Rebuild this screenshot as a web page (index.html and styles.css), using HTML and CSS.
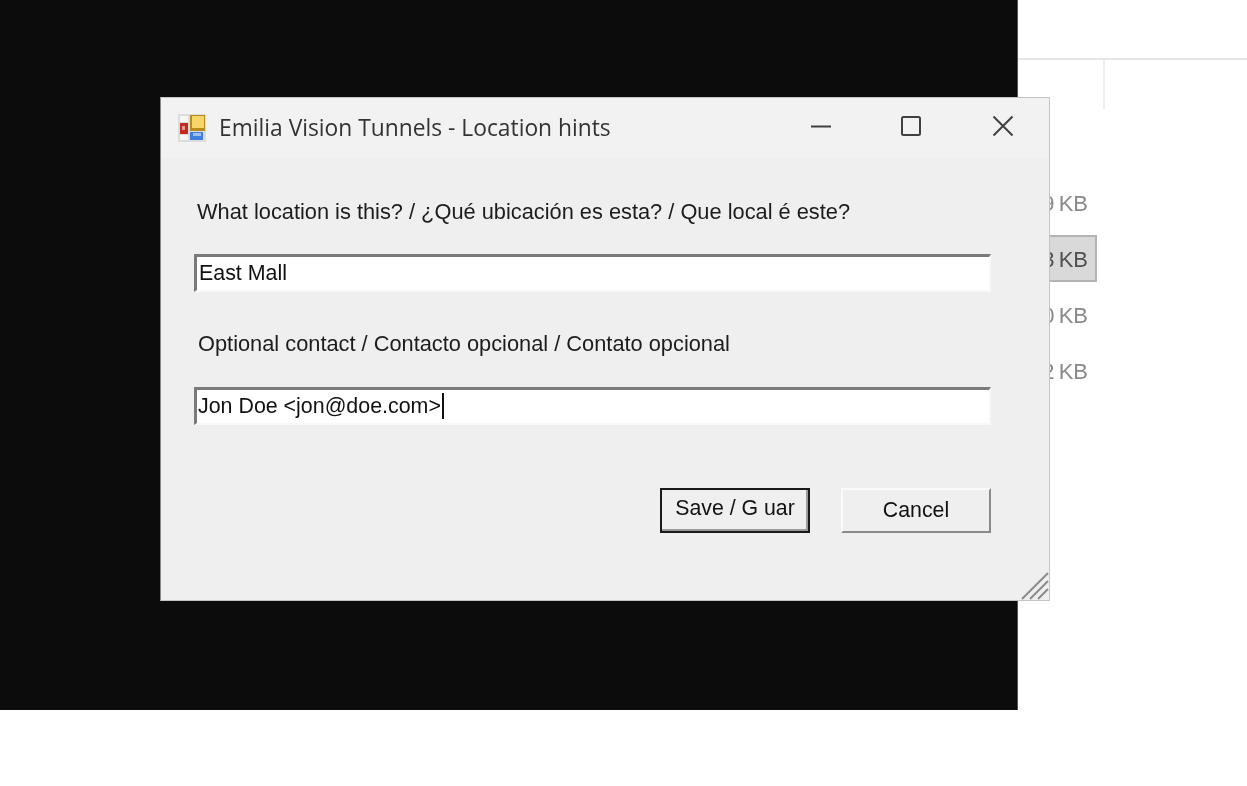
FILE: index.html
```html
<!DOCTYPE html>
<html lang="en">
<head>
  <meta charset="UTF-8">
  <title>Emilia Vision Tunnels - Location hints</title>
  <link rel="stylesheet" href="styles.css">
</head>
<body>
  <div class="desktop">
    <div class="screen"></div>

    <div class="files">
      <div class="files-head"></div>
      <div class="files-rule"></div>
      <div class="file-list">
        <div class="file-row">9 KB</div>
        <div class="file-row selected">3 KB</div>
        <div class="file-row">0 KB</div>
        <div class="file-row">2 KB</div>
      </div>
    </div>

    <div class="dialog">
      <div class="titlebar">
        <svg class="app-icon" width="28" height="28" viewBox="0 0 28 28">
          <rect x="0" y="0" width="28" height="28" fill="#dcdcdc"/>
          <rect x="2" y="2" width="8" height="6" fill="#f6f6f6"/>
          <rect x="2" y="21" width="8" height="5" fill="#f6f6f6"/>
          <rect x="2" y="9" width="8" height="11" fill="#c22a22"/>
          <rect x="4" y="12" width="3" height="4" fill="#ef9a90"/>
          <rect x="12" y="1" width="15" height="16" fill="#b98a1c"/>
          <rect x="14" y="2" width="12" height="12" fill="#f8d568"/>
          <rect x="12" y="18" width="13" height="8" fill="#3f7fe0"/>
          <rect x="15" y="19" width="8" height="3" fill="#9cc2f4"/>
        </svg>
        <span class="title">Emilia Vision Tunnels - Location hints</span>
        <div class="controls">
          <svg class="control" width="22" height="22" viewBox="0 0 22 22"><path d="M1 11.5h20" stroke="#404040" stroke-width="2" fill="none"/></svg>
          <svg class="control" width="22" height="22" viewBox="0 0 22 22"><rect x="2" y="2" width="18" height="18" rx="1.5" stroke="#404040" stroke-width="2" fill="none"/></svg>
          <svg class="control close" width="22" height="22" viewBox="0 0 22 22"><path d="M1.5 1.5l19 19M20.5 1.5l-19 19" stroke="#404040" stroke-width="2" fill="none"/></svg>
        </div>
      </div>

      <div class="content">
        <label class="prompt">What location is this? / ¿Qué ubicación es esta? / Que local é este?</label>
        <div class="field">East Mall</div>
        <label class="prompt second">Optional contact / Contacto opcional / Contato opcional</label>
        <div class="field">Jon Doe &lt;jon@doe.com&gt;<span class="caret"></span></div>
        <div class="actions">
          <button class="btn default">Save / G uar</button>
          <button class="btn">Cancel</button>
        </div>
      </div>

      <svg class="grip" width="30" height="30" viewBox="0 0 30 30">
        <path d="M3 29L29 3M11 29L29 11M19 29L29 19" stroke="#8c8c8c" stroke-width="2" fill="none"/>
      </svg>
    </div>
  </div>
</body>
</html>
```

FILE: styles.css
```css
html, body {
  margin: 0;
  padding: 0;
  background: #fff;
}
.desktop {
  position: relative;
  display: flex;
  width: 1247px;
  height: 786px;
  overflow: hidden;
  font-family: "Liberation Sans", Arial, sans-serif;
  color: #1c1c1c;
  filter: blur(0.5px);
}
.screen {
  width: 1017px;
  height: 710px;
  background: #0c0c0c;
  border-right: 1px solid #555;
}
.files {
  flex: 1;
  display: flex;
  flex-direction: column;
}
.files-head {
  height: 58px;
  border-bottom: 2px solid #e6e6e6;
}
.files-rule {
  width: 2px;
  height: 49px;
  margin-left: 85px;
  background: #ececec;
}
.file-list {
  display: flex;
  flex-direction: column;
  gap: 9px;
  width: 79px;
  margin-top: 70px;
}
.file-row {
  height: 47px;
  line-height: 49px;
  padding-right: 9px;
  text-align: right;
  font-size: 22px;
  word-spacing: -2px;
  color: #8a8a8a;
  box-sizing: border-box;
}
.file-row.selected {
  background: #d9d9d9;
  border: 2px solid #b4b4b4;
  line-height: 45px;
  padding-right: 7px;
  color: #505050;
}
.dialog {
  position: absolute;
  left: 160px;
  top: 97px;
  width: 890px;
  height: 504px;
  box-sizing: border-box;
  background: #efefef;
  border: 1px solid #c4c4c4;
  border-left-color: #888;
}
.titlebar {
  display: flex;
  align-items: center;
  height: 60px;
  padding-left: 18px;
  background: #f2f2f2;
}
.app-icon {
  margin: -1px 0 0 -1px;
}
.title {
  margin: -2px 0 0 13px;
  font-family: "Open Sans", sans-serif;
  font-size: 22.8px;
  color: #333;
}
.controls {
  display: flex;
  gap: 68px;
  margin: -4px 35px 0 auto;
}
.control.close {
  margin-left: 2px;
}
.content {
  padding: 39px 58px 0 33px;
}
.prompt {
  display: block;
  margin-left: 3px;
  font-size: 21.8px;
  line-height: 30px;
}
.prompt.second {
  margin-left: 4px;
  margin-top: 37px;
}
.field {
  height: 38px;
  margin-top: 27px;
  padding-left: 2px;
  box-sizing: border-box;
  background: #fff;
  border-style: solid;
  border-width: 3px 2px 2px 3px;
  border-color: #7a7a7a #f8f8f8 #f8f8f8 #7a7a7a;
  font-size: 21.4px;
  line-height: 32px;
  color: #111;
  white-space: nowrap;
}
.prompt.second + .field {
  margin-top: 28px;
  padding-left: 1px;
}
.caret {
  display: inline-block;
  width: 2px;
  height: 26px;
  margin-left: 1px;
  vertical-align: -6px;
  background: #111;
}
.actions {
  display: flex;
  justify-content: flex-end;
  gap: 31px;
  margin-top: 63px;
}
.btn {
  width: 150px;
  height: 45px;
  padding: 0;
  box-sizing: border-box;
  background: #efefef;
  border-style: solid;
  border-width: 2px;
  border-color: #fafafa #8a8a8a #8a8a8a #fafafa;
  font-family: "Liberation Sans", Arial, sans-serif;
  font-size: 21.3px;
  color: #111;
}
.btn.default {
  padding-bottom: 5px;
  border: 2px solid #1a1a1a;
  box-shadow: inset -2px -2px 0 #9a9a9a;
}
.grip {
  position: absolute;
  right: 0;
  bottom: 0;
}
```
